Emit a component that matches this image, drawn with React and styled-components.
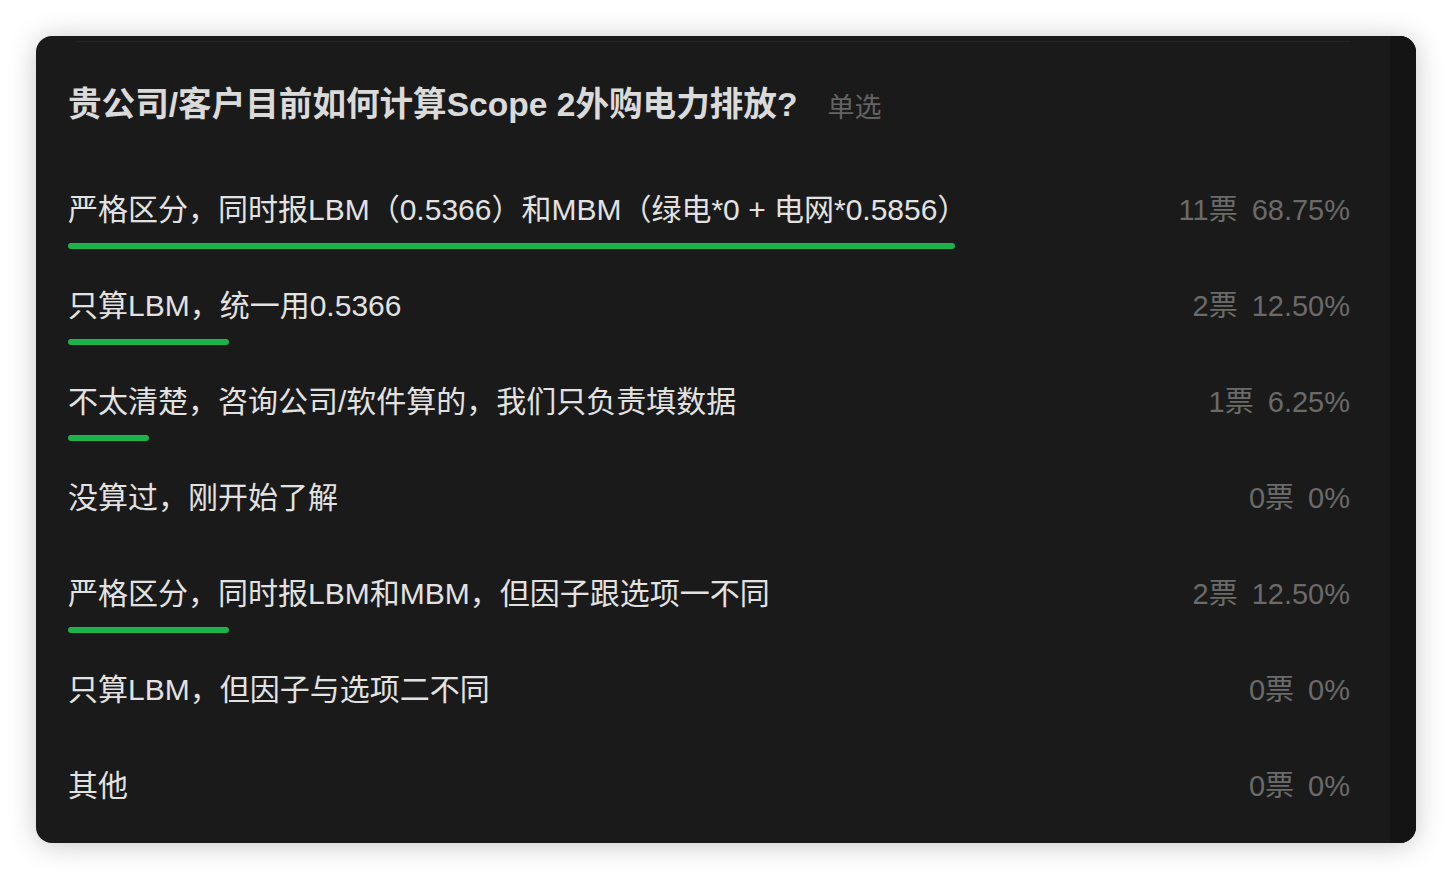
import React from "react";
import styled, { createGlobalStyle } from "styled-components";

const GlobalStyle = createGlobalStyle`
  body {
    margin: 0;
    background: #ffffff;
    font-family: "Liberation Sans", "Noto Sans CJK SC", sans-serif;
  }
`;

const Page = styled.div`
  padding: 36px;
  width: 1452px;
  height: 880px;
  box-sizing: border-box;
`;

const Card = styled.div`
  display: flex;
  width: 1380px;
  height: 807px;
  border-radius: 16px;
  overflow: hidden;
  background: #1a1a1a;
  box-shadow: 0 2px 28px rgba(0, 0, 0, 0.22);
`;

const Content = styled.div`
  flex: 1;
  overflow: hidden;
  padding: 0 40px 0 32px;
`;

const Gutter = styled.div`
  width: 26px;
  background: #141414;
`;

const TopLine = styled.div`
  height: 1px;
  margin: 5px 0 0 8px;
  background: #232323;
`;

const Header = styled.div`
  display: flex;
  align-items: center;
  height: 44px;
  margin-top: 41px;
  margin-bottom: 60px;
`;

const Title = styled.h1`
  margin: 0;
  font-size: 33.6px;
  font-weight: 700;
  color: #dadada;
  line-height: 44px;
`;

const Tag = styled.span`
  margin-left: 30px;
  font-size: 27px;
  color: #636363;
`;

const Row = styled.div`
  height: 96px;
`;

const Line = styled.div`
  display: flex;
  align-items: center;
  justify-content: space-between;
  height: 40px;
`;

const Label = styled.span`
  font-size: 30px;
  color: #e2e2e2;
`;

const Stats = styled.span`
  font-size: 29px;
  color: #6a6a6a;
  white-space: nowrap;
`;

const Pct = styled.span`
  margin-left: 14px;
`;

const Track = styled.div`
  width: 1290px;
  height: 6px;
  margin-top: 16px;
`;

const Fill = styled.div`
  height: 100%;
  border-radius: 3px;
  background: #1db34b;
`;

const options = [
  { label: "严格区分，同时报LBM（0.5366）和MBM（绿电*0 + 电网*0.5856）", votes: 11, pct: "68.75%", value: 68.75 },
  { label: "只算LBM，统一用0.5366", votes: 2, pct: "12.50%", value: 12.5 },
  { label: "不太清楚，咨询公司/软件算的，我们只负责填数据", votes: 1, pct: "6.25%", value: 6.25 },
  { label: "没算过，刚开始了解", votes: 0, pct: "0%", value: 0 },
  { label: "严格区分，同时报LBM和MBM，但因子跟选项一不同", votes: 2, pct: "12.50%", value: 12.5 },
  { label: "只算LBM，但因子与选项二不同", votes: 0, pct: "0%", value: 0 },
  { label: "其他", votes: 0, pct: "0%", value: 0 },
];

export default function App() {
  return (
    <>
      <GlobalStyle />
      <Page>
        <Card>
          <Content>
            <TopLine />
            <Header>
              <Title>贵公司/客户目前如何计算Scope 2外购电力排放?</Title>
              <Tag>单选</Tag>
            </Header>
            {options.map((o) => (
              <Row key={o.label}>
                <Line>
                  <Label>{o.label}</Label>
                  <Stats>
                    {o.votes}票<Pct>{o.pct}</Pct>
                  </Stats>
                </Line>
                <Track>
                  {o.value > 0 && <Fill style={{ width: `${o.value}%` }} />}
                </Track>
              </Row>
            ))}
          </Content>
          <Gutter />
        </Card>
      </Page>
    </>
  );
}
